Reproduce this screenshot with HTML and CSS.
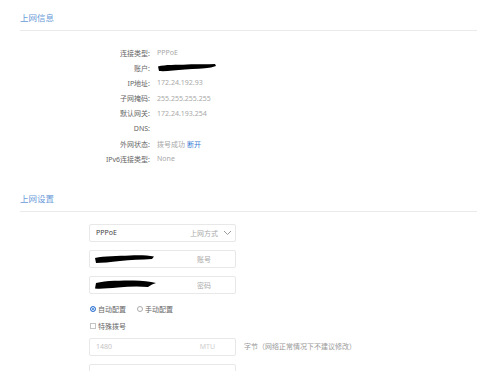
FILE: index.html
```html
<!DOCTYPE html>
<html lang="zh-CN">
<head>
    <meta charset="UTF-8">
    <meta name="viewport" content="width=device-width, initial-scale=1.0">
    <title>上网设置</title>
    <link rel="stylesheet" href="styles.css">
</head>
<body>
    <div class="section">
        <h2 class="section-title">上网信息</h2>
        <div class="info-list">
            <div class="info-row"><span class="info-label">连接类型:</span><span class="info-value">PPPoE</span></div>
            <div class="info-row"><span class="info-label">账户:</span><span class="info-value">
                <svg class="redact" width="60" height="9" viewBox="0 0 60 9"><path d="M1 3.5 C8 1.5 20 2 30 1.5 C42 1 50 1.5 58 1 L59 3 L54 4.5 C46 5.5 38 6 28 6.5 C18 7.5 8 8.5 2 8 Z" fill="#000"/></svg>
            </span></div>
            <div class="info-row"><span class="info-label">IP地址:</span><span class="info-value">172.24.192.93</span></div>
            <div class="info-row"><span class="info-label">子网掩码:</span><span class="info-value">255.255.255.255</span></div>
            <div class="info-row"><span class="info-label">默认网关:</span><span class="info-value">172.24.193.254</span></div>
            <div class="info-row"><span class="info-label">DNS:</span><span class="info-value"></span></div>
            <div class="info-row"><span class="info-label">外网状态:</span><span class="info-value">拨号成功 <a class="link" href="#">断开</a></span></div>
            <div class="info-row"><span class="info-label">IPv6连接类型:</span><span class="info-value">None</span></div>
        </div>
    </div>

    <div class="section section-2">
        <h2 class="section-title">上网设置</h2>
        <div class="form">
            <div class="field select">
                <span class="field-text">PPPoE</span>
                <span class="field-hint">上网方式</span>
                <svg class="chevron" width="9" height="6" viewBox="0 0 9 6"><path d="M1 1 L4.5 4.5 L8 1" fill="none" stroke="#999" stroke-width="1"/></svg>
            </div>
            <div class="field">
                <svg class="redact" width="62" height="10" viewBox="0 0 62 10"><path d="M1 4 C10 2 24 2 36 1.5 C46 1 54 1.5 60 2.5 L58 5 C48 5.5 36 6 26 7 C16 8 8 9 2 9 Z" fill="#000"/></svg>
                <span class="field-hint">账号</span>
            </div>
            <div class="field">
                <svg class="redact" width="64" height="11" viewBox="0 0 64 11"><path d="M2 4 C12 1.5 28 1.5 40 1.5 C48 1.5 56 2.5 62 4 L58 5.5 L54 8 C44 7 34 7.5 24 8.5 C14 9.5 6 10 1 9.5 Z" fill="#000"/></svg>
                <span class="field-hint">密码</span>
            </div>
            <div class="options">
                <label class="opt"><span class="radio checked"></span>自动配置</label>
                <label class="opt"><span class="radio"></span>手动配置</label>
            </div>
            <div class="options">
                <label class="opt"><span class="checkbox"></span>特殊拨号</label>
            </div>
            <div class="field-row">
                <div class="field disabled">
                    <span class="field-text">1480</span>
                    <span class="field-hint">MTU</span>
                </div>
                <span class="field-note">字节（网络正常情况下不建议修改）</span>
            </div>
            <div class="field"></div>
        </div>
    </div>
</body>
</html>
```

FILE: styles.css
```css
* {
    box-sizing: border-box;
    margin: 0;
    padding: 0;
}

body {
    font-family: 'Noto Sans', 'Noto Sans CJK SC', sans-serif;
    background-color: #fff;
    color: #666;
    font-size: 7px;
    overflow: hidden;
    height: 371px;
}

.section {
    padding: 10px 23px 0 20px;
}

.section-2 {
    padding-top: 24px;
}

.section-title {
    font-size: 8.5px;
    font-weight: normal;
    color: #6a9ad8;
    line-height: 16px;
    padding-bottom: 4px;
    border-bottom: 1px solid #eaeaea;
}

.info-list {
    padding-top: 14px;
}

.info-row {
    display: flex;
    align-items: center;
    height: 15.2px;
}

.info-label {
    width: 130px;
    text-align: right;
    color: #666;
}

.info-value {
    padding-left: 7px;
    color: #a8a8a8;
    display: flex;
    align-items: center;
}

.link {
    color: #3a7bd5;
    text-decoration: none;
    margin-left: 2px;
}

.redact {
    display: block;
}

.form {
    padding-top: 12px;
    padding-left: 69px;
}

.field {
    width: 147px;
    height: 18px;
    border: 1px solid #e8e8e8;
    border-radius: 2px;
    display: flex;
    align-items: center;
    padding: 0 6px;
    margin-bottom: 8px;
}

.field-text {
    color: #444;
    flex: 1;
}

.field .redact {
    flex: none;
    margin-right: auto;
    margin-left: -2px;
}

.field-hint {
    color: #aaa;
    margin-left: auto;
    margin-right: 18px;
}

.select {
    padding-right: 3px;
}

.select .field-hint {
    margin-right: 5px;
}

.options {
    display: flex;
    align-items: center;
    gap: 11px;
    height: 14px;
    margin-bottom: 3px;
    padding-left: 1px;
}

.opt {
    display: flex;
    align-items: center;
    color: #666;
}

.radio {
    width: 6px;
    height: 6px;
    border-radius: 50%;
    border: 1px solid #aaa;
    margin-right: 2px;
}

.radio.checked {
    border: 1.5px solid #3a7bd5;
    background: #3a7bd5;
    box-shadow: inset 0 0 0 1px #fff;
}

.checkbox {
    width: 6px;
    height: 6px;
    border: 1px solid #c4c4c4;
    margin-right: 2px;
}

.field-row {
    display: flex;
    align-items: flex-start;
    margin-top: 5px;
}

.field.disabled .field-text {
    color: #c4c4c4;
}

.field.disabled .field-hint {
    color: #d0d0d0;
    margin-right: 14px;
}

.field-note {
    color: #999;
    margin-left: 8px;
    line-height: 18px;
}
```
